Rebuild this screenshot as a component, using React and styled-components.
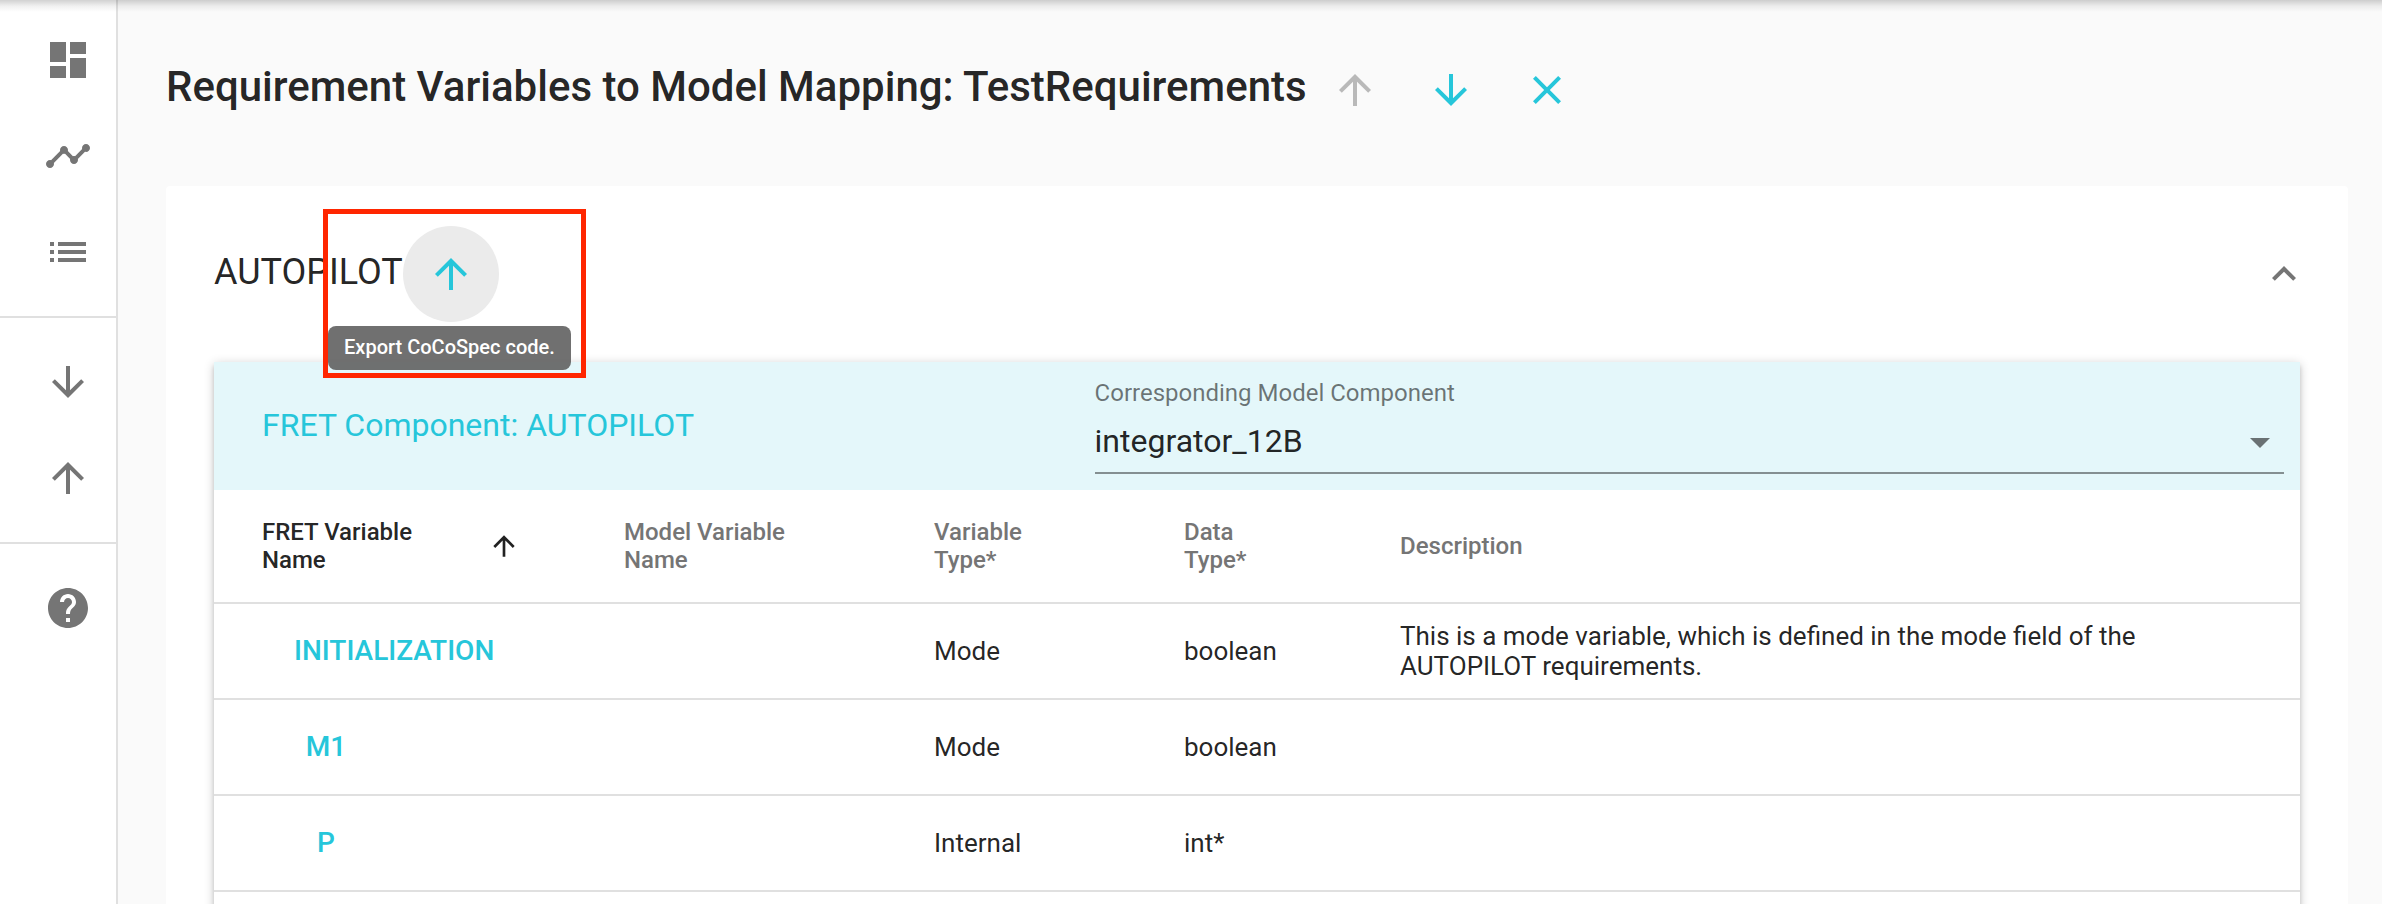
import React from 'react';
import styled, { createGlobalStyle } from 'styled-components';

const GlobalStyle = createGlobalStyle`
  *, *::before, *::after { box-sizing: border-box; }
  body {
    margin: 0;
    background: #fafafa;
    color: rgba(0, 0, 0, 0.87);
    font-family: Roboto, "Liberation Sans", sans-serif;
    font-size: 26px;
  }
`;

const ICONS = {
  dashboard: 'M3 13h8V3H3v10zm0 8h8v-6H3v6zm10 0h8V11h-8v10zm0-18v6h8V3h-8z',
  timeline:
    'M23 8c0 1.1-.9 2-2 2-.18 0-.35-.02-.51-.07l-3.56 3.55c.05.16.07.34.07.52 0 1.1-.9 2-2 2s-2-.9-2-2c0-.18.02-.36.07-.52l-2.55-2.55c-.16.05-.34.07-.52.07s-.36-.02-.52-.07l-4.55 4.56c.05.16.07.33.07.51 0 1.1-.9 2-2 2s-2-.9-2-2 .9-2 2-2c.18 0 .35.02.51.07l4.56-4.55C8.02 9.36 8 9.18 8 9c0-1.1.9-2 2-2s2 .9 2 2c0 .18-.02.36-.07.52l2.55 2.55c.16-.05.34-.07.52-.07s.36.02.52.07l3.55-3.56C19.02 8.35 19 8.18 19 8c0-1.1.9-2 2-2s2 .9 2 2z',
  list: 'M3 13h2v-2H3v2zm0 4h2v-2H3v2zm0-8h2V7H3v2zm4 4h14v-2H7v2zm0 4h14v-2H7v2zM7 7v2h14V7H7z',
  down: 'M20 12l-1.41-1.41L13 16.17V4h-2v12.17l-5.58-5.59L4 12l8 8 8-8z',
  up: 'M4 12l1.41 1.41L11 7.83V20h2V7.83l5.58 5.59L20 12l-8-8-8 8z',
  help: 'M12 2C6.48 2 2 6.48 2 12s4.48 10 10 10 10-4.48 10-10S17.52 2 12 2zm1 17h-2v-2h2v2zm2.07-7.75l-.9.92C13.45 12.9 13 13.5 13 15h-2v-.5c0-1.1.45-2.1 1.17-2.83l1.24-1.26c.37-.36.59-.86.59-1.41 0-1.1-.9-2-2-2s-2 .9-2 2H8c0-2.21 1.79-4 4-4s4 1.79 4 4c0 .88-.36 1.68-.93 2.25z',
  close:
    'M19 6.41L17.59 5 12 10.59 6.41 5 5 6.41 10.59 12 5 17.59 6.41 19 12 13.41 17.59 19 19 17.59 13.41 12z',
  less: 'M12 8l-6 6 1.41 1.41L12 10.83l4.59 4.58L18 14z',
  dropDown: 'M7 10l5 5 5-5z',
};

const Svg = styled.svg`
  display: block;
  flex: none;
  width: ${(p) => p.$size}px;
  height: ${(p) => p.$size}px;
  fill: currentColor;
`;

const Icon = ({ name, size = 48 }) => (
  <Svg viewBox="0 0 24 24" $size={size} aria-hidden="true">
    <path d={ICONS[name]} />
  </Svg>
);

const Shell = styled.div`
  display: flex;
  height: 100vh;
  overflow: hidden;
`;

const AppBarShadow = styled.div`
  position: absolute;
  inset: 0 0 auto;
  height: 12px;
  background: linear-gradient(rgba(0, 0, 0, 0.18), rgba(0, 0, 0, 0.06) 50%, rgba(0, 0, 0, 0));
  pointer-events: none;
`;

const Sidebar = styled.nav`
  flex: none;
  width: 118px;
  padding-top: 12px;
  background: #fff;
  border-right: 2px solid #e0e0e0;
`;

const NavGroup = styled.div`
  padding-bottom: 16px;

  & + & {
    padding-top: 16px;
    border-top: 2px solid #e0e0e0;
  }
`;

const NavButton = styled.button`
  display: flex;
  align-items: center;
  width: 100%;
  height: 96px;
  padding: 0 0 0 44px;
  border: 0;
  background: none;
  color: #757575;
  cursor: pointer;
`;

const Main = styled.main`
  flex: 1;
  min-width: 0;
  padding: 42px 34px 0 48px;
`;

const PageTitle = styled.h1`
  margin: 0 0 48px;
  font-size: 42px;
  font-weight: 500;
`;

const IconButton = styled.button`
  display: inline-flex;
  align-items: center;
  justify-content: center;
  width: 96px;
  height: 96px;
  padding: 0;
  border: 0;
  border-radius: 50%;
  vertical-align: middle;
  background: ${(p) => (p.$hovered ? '#ebebeb' : 'none')};
  color: ${(p) => (p.$muted ? '#757575' : '#26c6da')};
  cursor: pointer;

  &:disabled {
    color: rgba(0, 0, 0, 0.26);
    cursor: default;
  }
`;

const Panel = styled.section`
  padding: 40px 48px 48px;
  border-radius: 4px;
  background: #fff;
`;

const PanelSummary = styled.div`
  display: flex;
  align-items: center;
  justify-content: space-between;
  margin: 0 -32px 40px 0;
`;

const PanelTitle = styled.h2`
  margin: 0;
  font-size: 36px;
  font-weight: 400;
`;

const TooltipAnchor = styled.span`
  position: relative;
  display: inline-flex;
  vertical-align: middle;
`;

const Tooltip = styled.span`
  position: absolute;
  top: 100px;
  right: -72px;
  z-index: 1;
  padding: 8px 16px 10px;
  border-radius: 8px;
  background: rgba(97, 97, 97, 0.9);
  color: #fff;
  font-size: 20px;
  font-weight: 500;
  line-height: 26px;
  white-space: nowrap;
`;

const Highlight = styled.span`
  position: absolute;
  top: -17px;
  left: -80px;
  z-index: 2;
  width: 263px;
  height: 169px;
  border: 5px solid #ff2600;
  pointer-events: none;
`;

const Card = styled.div`
  padding-bottom: 96px;
  background: #fff;
  box-shadow:
    0 2px 10px rgba(0, 0, 0, 0.2),
    0 4px 4px rgba(0, 0, 0, 0.14),
    0 6px 2px -4px rgba(0, 0, 0, 0.12);
`;

const Toolbar = styled.div`
  display: grid;
  grid-template-columns: 7fr 10fr;
  align-items: center;
  padding: 16px 16px 16px 48px;
  background: #e4f7fa;
`;

const ToolbarTitle = styled.h3`
  margin: 0;
  padding-bottom: 2px;
  color: #26c6da;
  font-size: 32px;
  font-weight: 400;
`;

const Field = styled.div`
  position: relative;
`;

const FieldLabel = styled.label`
  display: block;
  padding-bottom: 2px;
  color: rgba(0, 0, 0, 0.54);
  font-size: 24px;
  line-height: 30px;
`;

const Select = styled.select`
  display: block;
  width: 100%;
  height: 64px;
  padding: 0;
  appearance: none;
  border: 0;
  border-bottom: 2px solid rgba(0, 0, 0, 0.42);
  border-radius: 0;
  background: none;
  color: rgba(0, 0, 0, 0.87);
  font: 400 32px Roboto, "Liberation Sans", sans-serif;
`;

const SelectArrow = styled.span`
  position: absolute;
  right: 0;
  bottom: 8px;
  color: rgba(0, 0, 0, 0.54);
  pointer-events: none;
`;

const Table = styled.table`
  width: 100%;
  border-collapse: separate;
  border-spacing: 0;
  table-layout: fixed;
`;

const Col = styled.col`
  width: ${(p) => p.$width};
`;

const HeadCell = styled.th`
  height: 114px;
  padding: 0 ${(p) => (p.$sorted ? 56 : 96)}px 0 48px;
  border-bottom: 2px solid #e0e0e0;
  color: #757575;
  font-size: 24px;
  font-weight: 500;
  line-height: 28px;
  text-align: left;
`;

const SortButton = styled.button`
  display: flex;
  align-items: center;
  width: 100%;
  padding: 0;
  border: 0;
  background: none;
  color: ${(p) => (p.$active ? 'rgba(0, 0, 0, 0.87)' : 'inherit')};
  font: inherit;
  text-align: left;
  cursor: pointer;
`;

const SortLabel = styled.span`
  flex: 1;
  padding-right: ${(p) => (p.$active ? 40 : 0)}px;
`;

const Cell = styled.td`
  height: 96px;
  padding: 0 48px;
  border-bottom: 2px solid #e0e0e0;
  font-size: 26px;
  line-height: 30px;
`;

const VariableButton = styled.button`
  min-width: 128px;
  height: 64px;
  padding: 0 32px 2px;
  border: 0;
  background: none;
  color: #26c6da;
  font: 500 28px Roboto, "Liberation Sans", sans-serif;
  cursor: pointer;
`;

const NAV = [
  [['dashboard', 'Dashboard'], ['timeline', 'Analysis'], ['list', 'Requirements']],
  [['down', 'Import'], ['up', 'Export']],
  [['help', 'Help']],
];

const COLUMNS = [
  { label: 'FRET Variable Name', width: '362px', sorted: true },
  { label: 'Model Variable Name', width: '310px' },
  { label: 'Variable Type*', width: '250px' },
  { label: 'Data Type*', width: '216px' },
  { label: 'Description', width: 'auto' },
];

const ROWS = [
  {
    name: 'INITIALIZATION',
    type: 'Mode',
    data: 'boolean',
    description:
      'This is a mode variable, which is defined in the mode field of the AUTOPILOT requirements.',
  },
  { name: 'M1', type: 'Mode', data: 'boolean' },
  { name: 'P', type: 'Internal', data: 'int*' },
];

function VariableTable() {
  return (
    <Table>
      <colgroup>
        {COLUMNS.map((c) => (
          <Col key={c.label} $width={c.width} />
        ))}
      </colgroup>
      <thead>
        <tr>
          {COLUMNS.map((c) => (
            <HeadCell
              key={c.label}
              scope="col"
              $sorted={c.sorted}
              aria-sort={c.sorted ? 'ascending' : undefined}
            >
              <SortButton $active={c.sorted}>
                <SortLabel $active={c.sorted}>{c.label}</SortLabel>
                {c.sorted && <Icon name="up" size={32} />}
              </SortButton>
            </HeadCell>
          ))}
        </tr>
      </thead>
      <tbody>
        {ROWS.map((r) => (
          <tr key={r.name}>
            <Cell>
              <VariableButton>{r.name}</VariableButton>
            </Cell>
            <Cell>{r.model}</Cell>
            <Cell>{r.type}</Cell>
            <Cell>{r.data}</Cell>
            <Cell>{r.description}</Cell>
          </tr>
        ))}
      </tbody>
    </Table>
  );
}

export default function App() {
  return (
    <>
      <GlobalStyle />
      <Shell>
        <Sidebar>
          {NAV.map((group, i) => (
            <NavGroup key={i}>
              {group.map(([icon, label]) => (
                <NavButton key={icon} aria-label={label}>
                  <Icon name={icon} />
                </NavButton>
              ))}
            </NavGroup>
          ))}
        </Sidebar>
        <Main>
          <PageTitle>
            Requirement Variables to Model Mapping: TestRequirements
            <IconButton disabled aria-label="Export">
              <Icon name="up" />
            </IconButton>
            <IconButton aria-label="Import">
              <Icon name="down" />
            </IconButton>
            <IconButton aria-label="Close">
              <Icon name="close" />
            </IconButton>
          </PageTitle>
          <Panel>
            <PanelSummary>
              <PanelTitle>
                AUTOPILOT
                <TooltipAnchor>
                  <IconButton $hovered aria-labelledby="export-tip">
                    <Icon name="up" />
                  </IconButton>
                  <Tooltip id="export-tip" role="tooltip">
                    Export CoCoSpec code.
                  </Tooltip>
                  <Highlight />
                </TooltipAnchor>
              </PanelTitle>
              <IconButton $muted aria-label="Collapse" aria-expanded="true">
                <Icon name="less" />
              </IconButton>
            </PanelSummary>
            <Card>
              <Toolbar>
                <ToolbarTitle>FRET Component: AUTOPILOT</ToolbarTitle>
                <Field>
                  <FieldLabel htmlFor="model-component">Corresponding Model Component</FieldLabel>
                  <Select id="model-component" defaultValue="integrator_12B">
                    <option>integrator_12B</option>
                  </Select>
                  <SelectArrow>
                    <Icon name="dropDown" />
                  </SelectArrow>
                </Field>
              </Toolbar>
              <VariableTable />
            </Card>
          </Panel>
        </Main>
        <AppBarShadow />
      </Shell>
    </>
  );
}
